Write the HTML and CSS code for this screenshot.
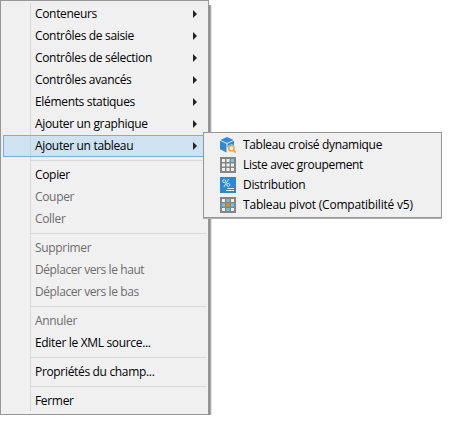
FILE: index.html
```
<!DOCTYPE html>
<html lang="fr">
<head>
<meta charset="utf-8">
<title>Menu contextuel</title>
<link rel="stylesheet" href="styles.css">
</head>
<body>
<nav class="menu">
  <div class="item sub"><span>Conteneurs</span></div>
  <div class="item sub"><span>Contrôles de saisie</span></div>
  <div class="item sub"><span>Contrôles de sélection</span></div>
  <div class="item sub"><span>Contrôles avancés</span></div>
  <div class="item sub"><span>Eléments statiques</span></div>
  <div class="item sub"><span>Ajouter un graphique</span></div>
  <div class="item sub active"><span>Ajouter un tableau</span></div>
  <div class="sep"></div>
  <div class="item"><span>Copier</span></div>
  <div class="item off"><span>Couper</span></div>
  <div class="item off"><span>Coller</span></div>
  <div class="sep"></div>
  <div class="item off"><span>Supprimer</span></div>
  <div class="item off tight"><span>Déplacer vers le haut</span></div>
  <div class="item off tight"><span>Déplacer vers le bas</span></div>
  <div class="sep"></div>
  <div class="item off"><span>Annuler</span></div>
  <div class="item"><span>Editer le XML source...</span></div>
  <div class="sep"></div>
  <div class="item"><span>Propriétés du champ...</span></div>
  <div class="sep"></div>
  <div class="item"><span>Fermer</span></div>
</nav>
<nav class="submenu">
  <div class="row">
    <svg width="16" height="16" viewBox="0 0 16 16"><path fill="#3388d2" d="M7 0l6.6 3L7 6 .4 3zM0 3.8l6.5 3v8.6L0 12.2zM7.5 6.8L14 3.8V8a4.4 4.4 0 0 0-6.5 3z"/><circle cx="11.4" cy="11.2" r="2.7" fill="#f4f4f4" stroke="#f0a030" stroke-width="1.4"/><path d="M13.3 13.1l2.4 2.5" stroke="#f0a030" stroke-width="1.7"/></svg>
    <span>Tableau croisé dynamique</span>
  </div>
  <div class="row">
    <svg width="16" height="16" viewBox="0 0 16 16"><path fill="#858585" d="M0 0h16v16H0z"/><path fill="#f1f1f1" d="M2 2h3v3H2zM6.5 2h3v3h-3zM2 6.5h3v3H2zM6.5 6.5h3v3h-3zM11 6.5h3v3h-3zM2 11h3v3H2zM6.5 11h3v3h-3zM11 11h3v3h-3z"/><path fill="#66ccf5" d="M11 2h3v3h-3z"/></svg>
    <span>Liste avec groupement</span>
  </div>
  <div class="row">
    <svg width="16" height="16" viewBox="0 0 16 16"><path fill="#2f86d2" d="M0 0h16v16H0z"/><g fill="none" stroke="#d8ebfa"><circle cx="4.2" cy="4.2" r="1.5"/><circle cx="8.3" cy="7.9" r="1.5"/><path d="M8.7 2L3.8 10M7.5 11.5H14M6 13.5h8"/></g></svg>
    <span>Distribution</span>
  </div>
  <div class="row wide">
    <svg width="16" height="16" viewBox="0 0 16 16"><path fill="#858585" d="M0 0h16v16H0z"/><path fill="#f1f1f1" d="M2 2h3v3H2zM11 2h3v3h-3zM2 11h3v3H2zM11 11h3v3h-3z"/><path fill="#66ccf5" d="M6.5 2h3v3h-3zM2 6.5h3v3H2zM11 6.5h3v3h-3zM6.5 11h3v3h-3z"/><path fill="#e08a1c" d="M6.2 6.2h3.6v3.6H6.2z"/></svg>
    <span>Tableau pivot (Compatibilité v5)</span>
  </div>
</nav>
</body>
</html>
```
FILE: styles.css
```
* { box-sizing: border-box; }
body {
  margin: 0;
  background: #fff;
  color: #000;
  font: 12px/20px "Segoe UI", "Open Sans", "Noto Sans", sans-serif;
  letter-spacing: -0.33px;
  white-space: nowrap;
}
.menu {
  width: 209px;
  height: 415px;
  padding: 2px 2px 2px;
  border: 1px solid #979797;
  background: linear-gradient(#d7d7d7, #d7d7d7) 29px 2px / 1px 408px no-repeat #f0f0f0;
  box-shadow: 1px 5px 0 #8c8c8c, 2px 5px 0 #adadad, 3px 6px 0 #e2e2e2;
  clip-path: inset(0 -4px 0 0);
}
.item {
  display: flex;
  align-items: center;
  justify-content: space-between;
  height: 22px;
  padding: 0 8px 0 31px;
  border: 1px solid transparent;
}
.sub::after {
  content: "";
  border: 4px solid transparent;
  border-left-color: #222;
  border-right: 0;
}
.active { background: rgba(174, 211, 243, .5); border-color: #78aee5; }
.off { color: #6d6d6d; }
.tight { letter-spacing: -0.42px; }
.wide { letter-spacing: -0.2px; }
.sep {
  height: 7px;
  margin-left: 28px;
  background: linear-gradient(#d7d7d7, #d7d7d7) 0 3px / 100% 1px no-repeat;
}
.submenu {
  position: absolute;
  left: 203px;
  top: 132px;
  width: 239px;
  height: 86px;
  padding: 2px;
  border: 1px solid #979797;
  background: #f0f0f0;
  box-shadow: 0 1px 0 #b0b0b0;
}
.row {
  display: flex;
  align-items: center;
  gap: 7px;
  height: 20px;
  padding-left: 14px;
}
```
